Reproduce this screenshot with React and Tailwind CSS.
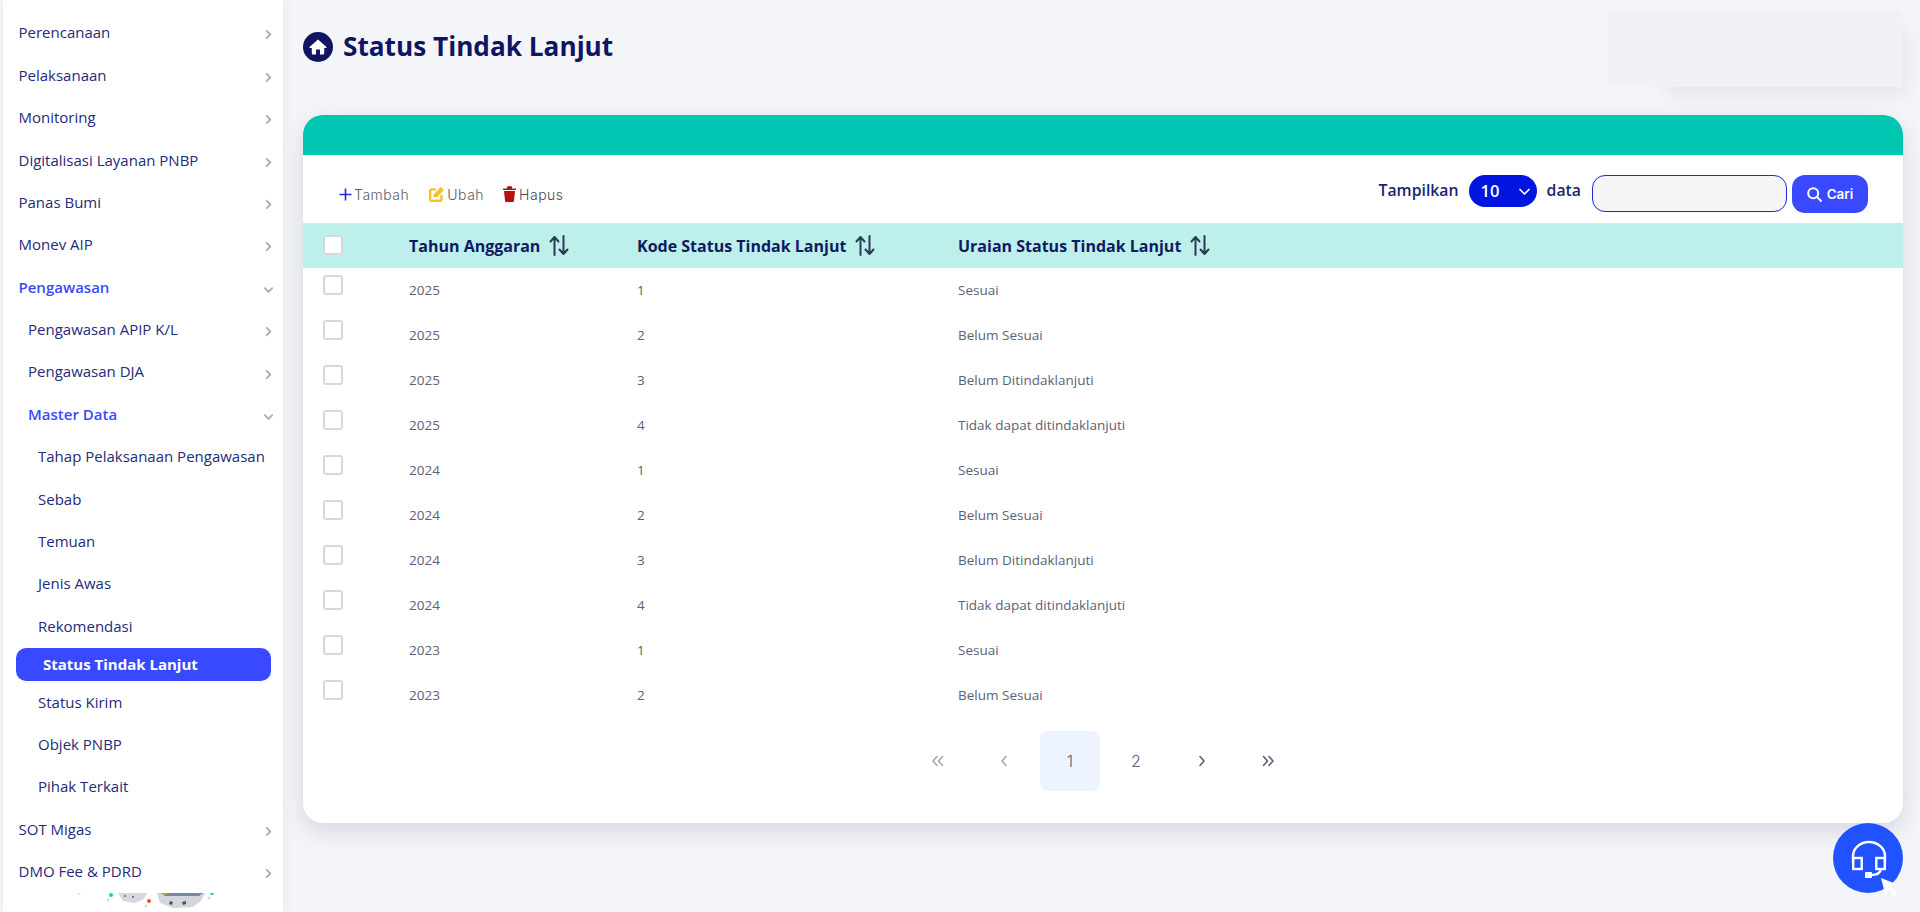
import React from "react";

const Chevron = ({ down }) => (
  <svg width="11" height="11" viewBox="0 0 12 12" fill="none" stroke="#a9adb5" strokeWidth="2" strokeLinecap="round" strokeLinejoin="round" className="absolute right-[9px] top-[18px]">
    {down ? <path d="M2 4.5 L6 8.5 L10 4.5" /> : <path d="M4 2 L8 6 L4 10" />}
  </svg>
);

const Item = ({ label, indent = "pl-[15.5px]", arrow, down, active }) => (
  <div className={`relative h-[42.4px] flex items-center text-[15px] ${indent} ${active ? "text-[#3949ff] font-semibold" : "text-[#252b78]"}`}>
    <span>{label}</span>
    {arrow && <Chevron down={down} />}
  </div>
);

const Sort = () => (
  <svg width="20" height="21" viewBox="0 0 20 21" fill="none" stroke="#2b3a55" strokeWidth="2" strokeLinecap="round" strokeLinejoin="round" className="ml-[9px]">
    <path d="M5.5 20 V2 M1.5 6.5 L5.5 2 L9.5 6.5" />
    <path d="M14.5 1 V19 M10.5 14.5 L14.5 19 L18.5 14.5" />
  </svg>
);

const Check = ({ cls }) => (
  <div className={`w-[20px] h-[20px] bg-white border-2 border-[#d6d8de] rounded-[3px] ml-[20px] ${cls}`} />
);

const rows = [
  ["2025", "1", "Sesuai"],
  ["2025", "2", "Belum Sesuai"],
  ["2025", "3", "Belum Ditindaklanjuti"],
  ["2025", "4", "Tidak dapat ditindaklanjuti"],
  ["2024", "1", "Sesuai"],
  ["2024", "2", "Belum Sesuai"],
  ["2024", "3", "Belum Ditindaklanjuti"],
  ["2024", "4", "Tidak dapat ditindaklanjuti"],
  ["2023", "1", "Sesuai"],
  ["2023", "2", "Belum Sesuai"],
];

const PageBtn = ({ children, active, muted }) => (
  <div className={`w-[60px] h-[60px] rounded-[8px] flex items-center justify-center text-[16px] font-['Inter',sans-serif] font-light ${active ? "bg-[#eef4ff]" : ""} ${muted ? "text-[#a4a8b2]" : "text-[#5b6073]"}`}>
    {children}
  </div>
);

const Pg = ({ d, stroke }) => (
  <svg width="14" height="12" viewBox="0 0 14 12" fill="none" stroke={stroke} strokeWidth="1.6" strokeLinecap="round" strokeLinejoin="round">
    <path d={d} />
  </svg>
);

export default function App() {
  return (
    <div className="w-[1920px] h-[912px] overflow-hidden flex bg-[#f4f5f9] font-['Open_Sans',sans-serif]">
      <aside className="ml-[3px] w-[280px] h-full shrink-0 bg-white pt-[11.4px] shadow-[2px_0_10px_rgba(40,50,90,0.06)]">
        <Item label="Perencanaan" arrow />
        <Item label="Pelaksanaan" arrow />
        <Item label="Monitoring" arrow />
        <Item label="Digitalisasi Layanan PNBP" arrow />
        <Item label="Panas Bumi" arrow />
        <Item label="Monev AIP" arrow />
        <Item label="Pengawasan" arrow down active />
        <Item label="Pengawasan APIP K/L" indent="pl-[25px]" arrow />
        <Item label="Pengawasan DJA" indent="pl-[25px]" arrow />
        <Item label="Master Data" indent="pl-[25px]" arrow down active />
        <Item label="Tahap Pelaksanaan Pengawasan" indent="pl-[35px]" />
        <Item label="Sebab" indent="pl-[35px]" />
        <Item label="Temuan" indent="pl-[35px]" />
        <Item label="Jenis Awas" indent="pl-[35px]" />
        <Item label="Rekomendasi" indent="pl-[35px]" />
        <div className="mt-[0.4px] ml-[13px] mr-[12px] h-[33px] rounded-[10px] bg-[#3949ff] text-white font-bold text-[15px] flex items-center pl-[27px]">
          Status Tindak Lanjut
        </div>
        <Item label="Status Kirim" indent="pl-[35px]" />
        <Item label="Objek PNBP" indent="pl-[35px]" />
        <Item label="Pihak Terkait" indent="pl-[35px]" />
        <Item label="SOT Migas" arrow />
        <Item label="DMO Fee & PDRD" arrow />
        <svg width="280" height="19" viewBox="0 0 280 19" className="block">
          <path d="M115 0 H144 L141 6 L132 10 L120 8 Z" fill="#d5d8de" />
          <path d="M154 0 H202 L198 8 L190 14 L170 15 L157 10 Z" fill="#d3d6dd" />
          <path d="M158 0 H200 L196 3 H162 Z" fill="#7488a8" />
          <rect x="160" y="0" width="4" height="2" fill="#c9a227" />
          <circle cx="122" cy="3" r="1" fill="#5b6478" />
          <circle cx="130" cy="4" r="1" fill="#5b6478" />
          <path d="M167 8 l3 1 l-1 3 l-3 -1 Z M179 9 l4 -1 l0 3 l-3 1 Z" fill="#4a5468" />
          <circle cx="108" cy="2" r="2" fill="#17cdbb" />
          <circle cx="146" cy="8" r="2" fill="#f0512d" />
          <circle cx="209" cy="0" r="2" fill="#17cdbb" />
          <circle cx="105" cy="7" r="1.5" fill="#d5d8de" />
          <circle cx="143" cy="13" r="1.5" fill="#d5d8de" />
          <circle cx="206" cy="5" r="1.5" fill="#d5d8de" />
          <circle cx="76" cy="0" r="1.5" fill="#d5d8de" />
        </svg>
      </aside>

      <main className="flex-1 min-w-0 pl-[20px] pr-[17px]">
        <header className="h-[115px] flex justify-between items-start pt-[11px]">
          <div className="flex items-center gap-[10px] mt-[21px]">
            <div className="w-[30px] h-[30px] rounded-full bg-[#0f1560] flex items-center justify-center">
              <svg width="18" height="16" viewBox="0 0 18 16" fill="white">
                <path d="M9 0.5 L17.5 8 Q18 9 16.8 9 H15.2 V14.5 Q15.2 15.5 14.2 15.5 H11 V10.5 H7 V15.5 H3.8 Q2.8 15.5 2.8 14.5 V9 H1.2 Q0 9 0.5 8 Z" />
              </svg>
            </div>
            <h1 className="text-[26.2px] leading-[30px] font-bold text-[#0f1560] -mt-[2px]">Status Tindak Lanjut</h1>
          </div>
          <div className="relative w-[294px] h-[76px] mr-[1px]">
            <div className="absolute left-[46px] right-0 top-0 bottom-0 shadow-[8px_12px_16px_-4px_rgba(60,70,110,0.08)]" />
            <div className="absolute inset-0 bg-[#f0f1f5]" />
          </div>
        </header>

        <section className="h-[708px] bg-white rounded-[20px] overflow-hidden shadow-[0_8px_22px_rgba(50,60,90,0.16)] relative">
          <div className="h-[40px] bg-[#00c5b1]" />
          <div className="h-[68px] flex items-start justify-between pl-[36px] pr-[35px]">
            <div className="flex items-center mt-[29px] h-[20px] text-[14px] tracking-[0.5px] text-[#5a5d66] font-['Inter',sans-serif] font-light">
              <svg width="13" height="13" viewBox="0 0 13 13" fill="none" stroke="#1d2bd8" strokeWidth="1.6" className="mr-[2px]">
                <path d="M6.5 0.5 V12.5 M0.5 6.5 H12.5" />
              </svg>
              <span>Tambah</span>
              <svg width="15" height="16" viewBox="0 0 15 16" fill="none" className="ml-[20px] mr-[3px]">
                <path d="M12.5 9 V13 Q12.5 14.8 10.7 14.8 H2.8 Q1.2 14.8 1.2 13 V5 Q1.2 3.4 2.8 3.4 H7" stroke="#fbbf1f" strokeWidth="2.4" />
                <path d="M4.5 11.5 L5 8 L11.5 1 L15 4 L8.2 11 Z" fill="#fbbf1f" />
              </svg>
              <span>Ubah</span>
              <svg width="13" height="16" viewBox="0 0 13 16" className="ml-[19px] mr-[3px]">
                <path d="M0 2.5 H4 V1 Q4 0.3 4.8 0.3 H8.2 Q9 0.3 9 1 V2.5 H13 V4 H0 Z" fill="#b80f0f" />
                <path d="M1 5 H12 L11 14.8 Q11 16 9.8 16 H3.2 Q2 16 2 14.8 Z" fill="#b80f0f" />
              </svg>
              <span className="text-[#44474f]">Hapus</span>
            </div>
            <div className="flex items-start mt-[20px]">
              <span className="text-[#1d2470] text-[15.8px] font-semibold h-[32px] flex items-center mr-[10px]">Tampilkan</span>
              <div className="relative w-[68px] h-[32px] rounded-full bg-[#0016de] text-white text-[16.5px] font-semibold flex items-center pl-[12px]">
                10
                <svg width="11" height="8" viewBox="0 0 11 8" fill="none" stroke="white" strokeWidth="1.7" strokeLinecap="round" strokeLinejoin="round" className="absolute right-[7px] top-[13px]">
                  <path d="M1 1.5 L5.5 6 L10 1.5" />
                </svg>
              </div>
              <span className="text-[#1d2470] text-[15.8px] font-semibold h-[32px] flex items-center ml-[10px] mr-[11px]">data</span>
              <input className="w-[195px] h-[37px] rounded-[13px] border border-[#1a2ad8] bg-[#f5f5f7] mr-[5px] outline-none" />
              <button className="w-[76px] h-[38px] rounded-[13px] bg-[#3949ff] text-white text-[13.5px] font-['Inter',sans-serif] font-semibold flex items-center justify-center gap-[5px]">
                <svg width="15" height="15" viewBox="0 0 15 15" fill="none" stroke="white" strokeWidth="2" strokeLinecap="round">
                  <circle cx="6.2" cy="6.2" r="5" />
                  <path d="M10 10 L14 14" />
                </svg>
                Cari
              </button>
            </div>
          </div>

          <div className="grid grid-cols-[106px_228px_321px_1fr] h-[45px] items-center bg-[#bdf0ea] text-[#0f1a60] text-[16px] font-bold">
            <Check cls="-mt-[1px]" />
            <div className="flex items-center">Tahun Anggaran<Sort /></div>
            <div className="flex items-center">Kode Status Tindak Lanjut<Sort /></div>
            <div className="flex items-center">Uraian Status Tindak Lanjut<Sort /></div>
          </div>
          {rows.map((r, i) => (
            <div key={i} className="grid grid-cols-[106px_228px_321px_1fr] h-[45px] text-[13.5px] text-[#5c6274] items-center">
              <Check cls="self-start mt-[7px]" />
              <div>{r[0]}</div>
              <div>{r[1]}</div>
              <div>{r[2]}</div>
            </div>
          ))}

          <div className="flex justify-center gap-[6px] mt-[13px]">
            <PageBtn muted><Pg stroke="#a4a8b2" d="M6 1.5 L2 6 L6 10.5 M11.5 1.5 L7.5 6 L11.5 10.5" /></PageBtn>
            <PageBtn muted><Pg stroke="#a4a8b2" d="M9 1.5 L5 6 L9 10.5" /></PageBtn>
            <PageBtn active>1</PageBtn>
            <PageBtn>2</PageBtn>
            <PageBtn><Pg stroke="#5b6073" d="M5 1.5 L9 6 L5 10.5" /></PageBtn>
            <PageBtn><Pg stroke="#5b6073" d="M2.5 1.5 L6.5 6 L2.5 10.5 M8 1.5 L12 6 L8 10.5" /></PageBtn>
          </div>
        </section>
      </main>

      <div className="fixed left-[1833px] top-[823px] w-[70px] h-[70px] rounded-full bg-[#2152ff] flex items-center justify-center">
        <svg width="40" height="40" viewBox="0 0 40 40" fill="none" stroke="white" strokeWidth="2.4">
          <path d="M5 24 V18 A16 14 0 0 1 37 18 V24" />
          <rect x="5.2" y="20" width="8.5" height="11" fill="none" />
          <rect x="28.3" y="20" width="8.5" height="11" fill="none" />
          <path d="M33 31 Q32 37 23 37" />
          <rect x="17" y="34" width="7" height="6" rx="1" fill="white" stroke="none" />
        </svg>
      </div>
      <svg width="18" height="20" viewBox="0 0 18 20" className="fixed left-[1880px] top-[877px]">
        <path d="M1 1 L15 6.5 L10.5 9.5 L17 16.5 L14 19.5 L8 12.5 L5 16.5 Z" fill="white" />
      </svg>
    </div>
  );
}
